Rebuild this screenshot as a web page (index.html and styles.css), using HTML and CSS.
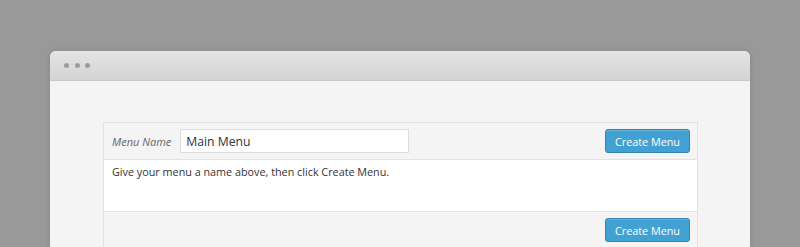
FILE: index.html
```html
<!DOCTYPE html>
<html lang="en">
<head>
    <meta charset="UTF-8">
    <meta name="viewport" content="width=device-width, initial-scale=1.0">
    <title>Menus</title>
    <link rel="stylesheet" href="styles.css">
</head>
<body>
    <div class="window">
        <div class="titlebar">
            <span class="dot"></span>
            <span class="dot"></span>
            <span class="dot"></span>
        </div>
        <div class="window-body">
            <div class="menu-panel">
                <div class="menu-header">
                    <label for="menu-name" class="menu-label">Menu Name</label>
                    <input type="text" id="menu-name" class="menu-input" value="Main Menu">
                    <button class="btn-primary">Create Menu</button>
                </div>
                <div class="menu-body">
                    <p>Give your menu a name above, then click Create Menu.</p>
                </div>
                <div class="menu-footer">
                    <button class="btn-primary">Create Menu</button>
                </div>
            </div>
        </div>
    </div>
</body>
</html>
```

FILE: styles.css
```css
body {
    margin: 0;
    padding: 51px 50px 0;
    background-color: #999;
    font-family: "Open Sans", "Liberation Sans", sans-serif;
    height: 247px;
    box-sizing: border-box;
    overflow: hidden;
}
.window {
    width: 700px;
    background: #f4f4f4;
    border-radius: 6px 6px 0 0;
    box-shadow: 0 0 6px rgba(0, 0, 0, 0.12);
    overflow: hidden;
}
.titlebar {
    height: 30px;
    background: linear-gradient(#e4e4e4, #d4d4d4);
    border-bottom: 1px solid #c8c8c8;
    display: flex;
    align-items: center;
    gap: 5.5px;
    padding-left: 14px;
    box-sizing: border-box;
}
.dot {
    width: 5px;
    height: 5px;
    border-radius: 50%;
    background: #9d9d9d;
}
.window-body {
    padding: 41px 52px 0 53px;
}
.menu-panel {
    border: 1px solid #e2e2e2;
    background: #f4f4f4;
}
.menu-header {
    display: flex;
    align-items: center;
    height: 36px;
    padding: 0 7px 0 8px;
    border-bottom: 1px solid #e2e2e2;
}
.menu-label {
    font-size: 11px;
    font-style: italic;
    color: #666;
    margin-right: 9px;
}
.menu-input {
    width: 229px;
    height: 24px;
    box-sizing: border-box;
    border: 1px solid #dddddd;
    background: #fff;
    padding: 0 5px;
    font-family: inherit;
    font-size: 12.2px;
    color: #333;
    outline: none;
}
.btn-primary {
    margin-left: auto;
    height: 24px;
    padding: 0 9px;
    background: #42a1d2;
    border: 1px solid #3085b6;
    border-radius: 3px;
    color: #fff;
    font-family: inherit;
    font-size: 10.8px;
    box-shadow: inset 0 1px 0 rgba(120, 200, 235, 0.5);
    cursor: pointer;
}
.menu-body {
    background: #fff;
    height: 51px;
    padding: 0 8px;
    border-bottom: 1px solid #e2e2e2;
}
.menu-body p {
    margin: 0;
    padding-top: 4px;
    font-size: 10.8px;
    color: #333;
}
.menu-footer {
    display: flex;
    padding: 6px 7px 6px 8px;
}
```
